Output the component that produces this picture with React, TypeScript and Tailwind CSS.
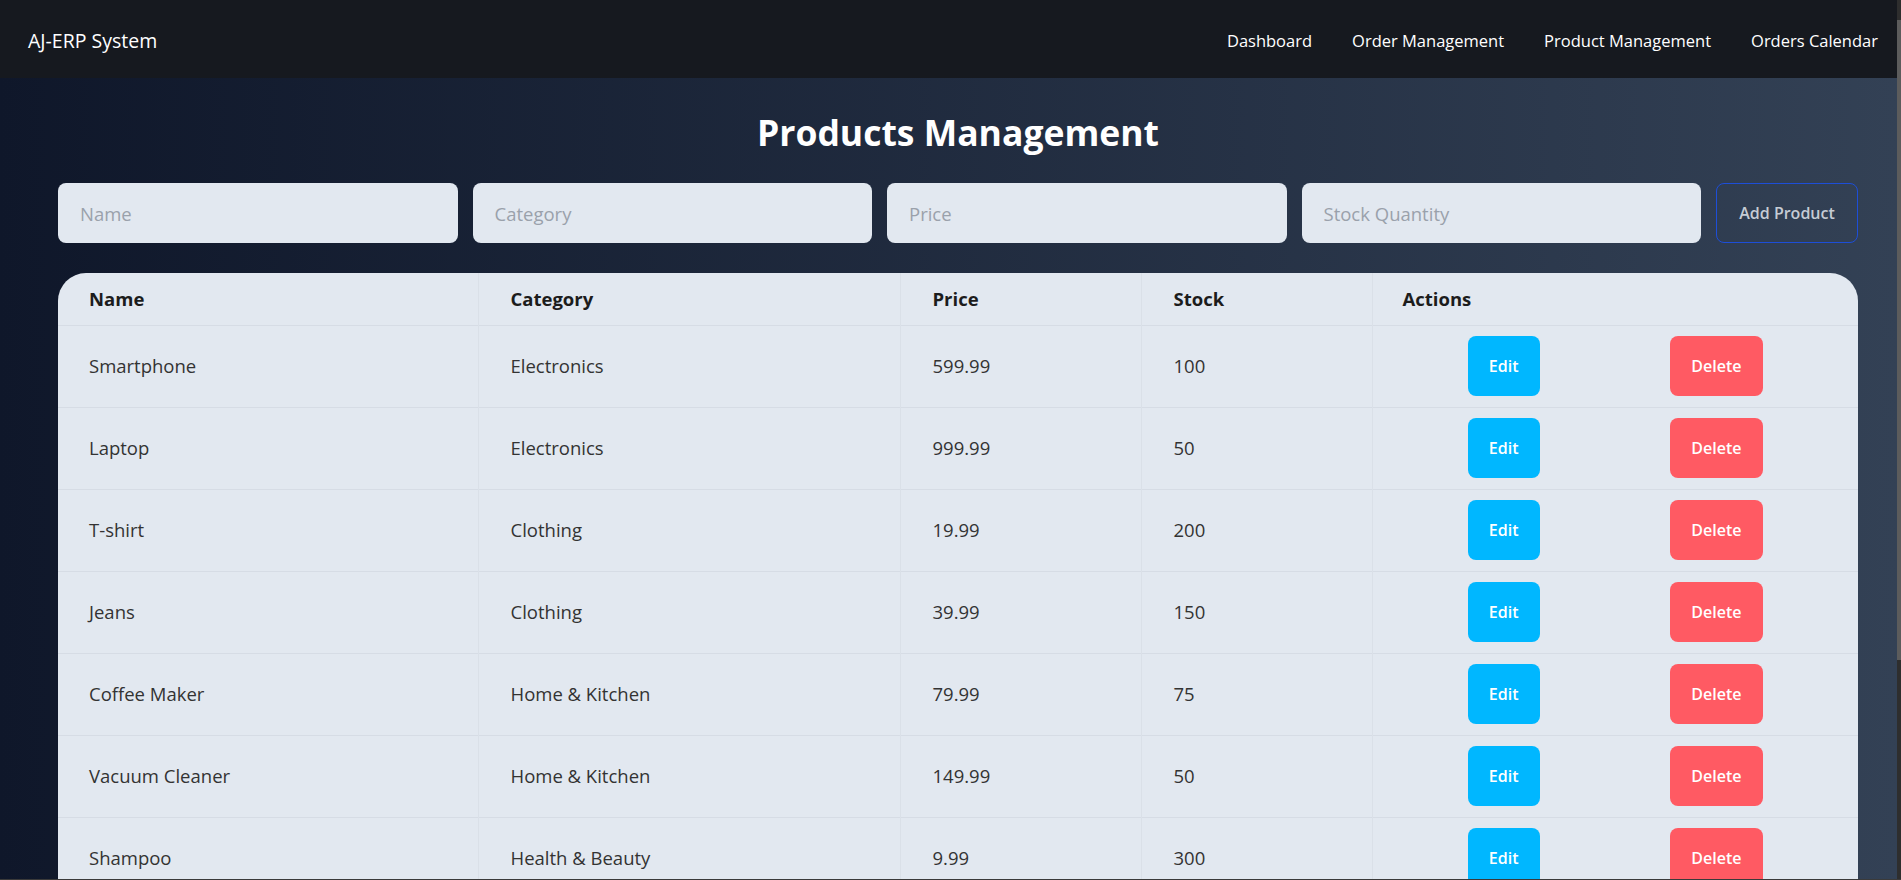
const products = [
  { name: "Smartphone", category: "Electronics", price: "599.99", stock: 100 },
  { name: "Laptop", category: "Electronics", price: "999.99", stock: 50 },
  { name: "T-shirt", category: "Clothing", price: "19.99", stock: 200 },
  { name: "Jeans", category: "Clothing", price: "39.99", stock: 150 },
  { name: "Coffee Maker", category: "Home & Kitchen", price: "79.99", stock: 75 },
  { name: "Vacuum Cleaner", category: "Home & Kitchen", price: "149.99", stock: 50 },
  { name: "Shampoo", category: "Health & Beauty", price: "9.99", stock: 300 },
  { name: "Toothpaste", category: "Health & Beauty", price: "4.99", stock: 500 },
];

const navLinks = ["Dashboard", "Order Management", "Product Management", "Orders Calendar"];

export default function App() {
  return (
    <div
      className="flex h-[880px] w-[1901px] overflow-hidden border-b border-[#3a3a3a]"
      style={{ fontFamily: "'Open Sans', 'Noto Sans', sans-serif" }}
    >
      <div className="flex w-[1897px] flex-col">
        {/* Navbar */}
        <nav className="flex h-[78px] shrink-0 items-center justify-between bg-[#16191f] pl-[28px] pr-[19px] pt-[4px] text-white">
          <span className="text-[19.5px]">AJ-ERP System</span>
          <div className="flex items-center gap-[40px] text-[16.5px]">
            {navLinks.map((l) => (
              <a key={l} href="#" className="text-white">
                {l}
              </a>
            ))}
          </div>
        </nav>

        {/* Main */}
        <main className="flex-1 bg-gradient-to-r from-[#0f172a] to-[#334155] pl-[58px] pr-[39px]">
          <h1 className="pt-[30px] text-center text-[35.5px] font-bold leading-[48px] text-white">
            Products Management
          </h1>

          <div className="mt-[27px] flex h-[60px] gap-[15px]">
            {["Name", "Category", "Price", "Stock Quantity"].map((p) => (
              <input
                key={p}
                placeholder={p}
                className="min-w-0 flex-1 rounded-[8px] bg-[#e2e8f0] px-[22px] pt-[2px] text-[18.5px] text-[#333] outline-none placeholder:text-[#9aa1ab]"
              />
            ))}
            <button className="w-[142px] shrink-0 rounded-[8px] border border-[#1d4ed8] text-[16px] font-semibold text-[#c6ccd5]">
              Add Product
            </button>
          </div>

          <div className="mt-[30px] overflow-hidden rounded-t-[28px] bg-[#e2e8f0]">
            <table className="w-[1800px] table-fixed border-collapse text-[18.5px]">
              <colgroup>
                <col className="w-[420px]" />
                <col className="w-[422px]" />
                <col className="w-[241px]" />
                <col className="w-[231px]" />
                <col className="w-[486px]" />
              </colgroup>
              <thead>
                <tr className="h-[52px] border-b border-[#d6dce5] text-left font-bold text-[#1c1c1c]">
                  <th className="border-r border-[#dae0e8] pl-[31px] font-bold">Name</th>
                  <th className="border-r border-[#dae0e8] pl-[32px] font-bold">Category</th>
                  <th className="border-r border-[#dae0e8] pl-[32px] font-bold">Price</th>
                  <th className="border-r border-[#dae0e8] pl-[32px] font-bold">Stock</th>
                  <th className="pl-[30px] font-bold">Actions</th>
                </tr>
              </thead>
              <tbody className="text-[#333]">
                {products.map((p) => (
                  <tr key={p.name} className="h-[82px] border-b border-[#d6dce5]">
                    <td className="border-r border-[#dae0e8] pl-[31px]">{p.name}</td>
                    <td className="border-r border-[#dae0e8] pl-[32px]">{p.category}</td>
                    <td className="border-r border-[#dae0e8] pl-[32px]">{p.price}</td>
                    <td className="border-r border-[#dae0e8] pl-[32px]">{p.stock}</td>
                    <td className="px-[30px]">
                      <div className="flex justify-around">
                        <button className="h-[60px] w-[72px] rounded-[8px] bg-[#00b7ff] text-[16px] font-semibold text-white">
                          Edit
                        </button>
                        <button className="h-[60px] w-[93px] rounded-[8px] bg-[#ff5a63] text-[16px] font-semibold text-white">
                          Delete
                        </button>
                      </div>
                    </td>
                  </tr>
                ))}
              </tbody>
            </table>
          </div>
        </main>
      </div>

      {/* Scrollbar */}
      <div className="flex w-[4px] flex-col bg-[#2e2e2e]">
        <div className="h-[20px]" />
        <div className="h-[640px] bg-[#5c5c5c]" />
      </div>
    </div>
  );
}
